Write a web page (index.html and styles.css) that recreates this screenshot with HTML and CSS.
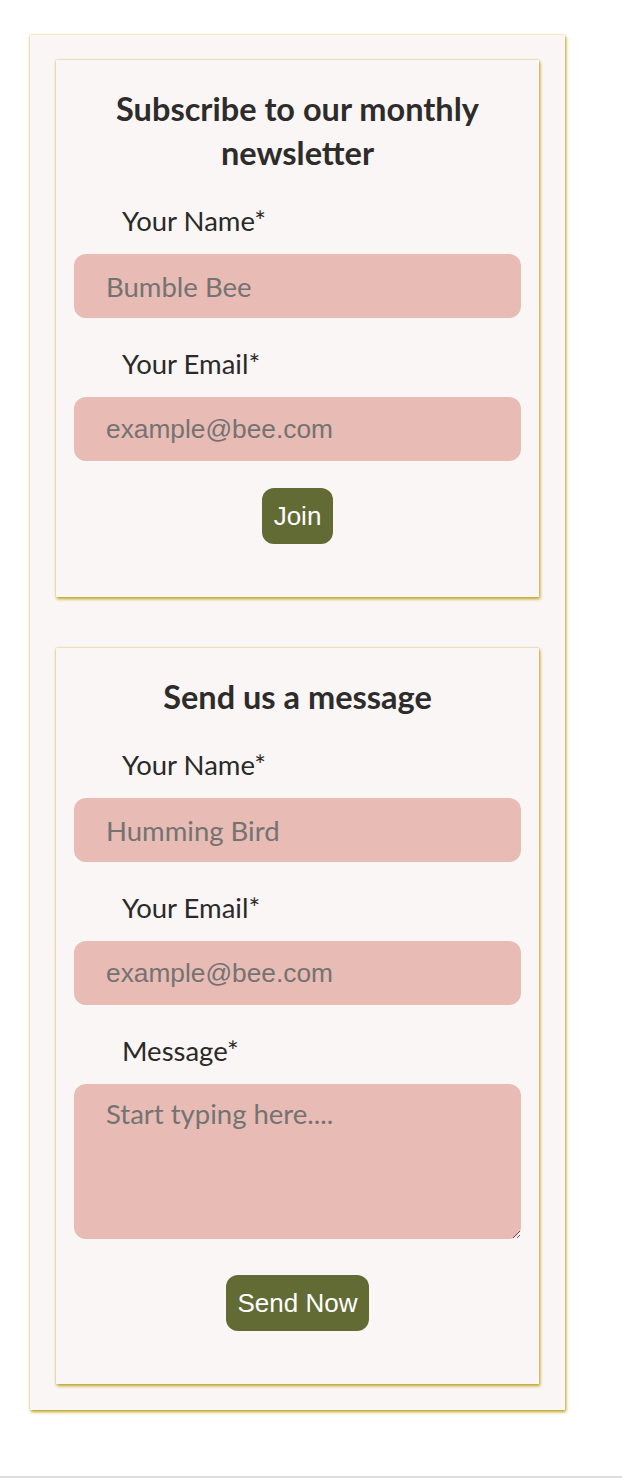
FILE: index.html
```html
<!DOCTYPE html>
<html lang="en">
<head>
<meta charset="utf-8">
<title>Contact</title>
<link rel="stylesheet" href="styles.css">
</head>
<body>
<main class="page">
  <section class="outer">
    <form class="card">
      <h2 class="card-title">Subscribe to our monthly newsletter</h2>
      <label class="field-label" for="n1">Your Name*</label>
      <input class="field" id="n1" type="text" placeholder="Bumble Bee">
      <label class="field-label" for="e1">Your Email*</label>
      <input class="field field-email" id="e1" type="email" placeholder="example@bee.com">
      <div class="actions"><button class="btn" type="button">Join</button></div>
    </form>
    <form class="card">
      <h2 class="card-title">Send us a message</h2>
      <label class="field-label" for="n2">Your Name*</label>
      <input class="field" id="n2" type="text" placeholder="Humming Bird">
      <label class="field-label" for="e2">Your Email*</label>
      <input class="field field-email" id="e2" type="email" placeholder="example@bee.com">
      <label class="field-label" for="m2">Message*</label>
      <textarea class="field field-area" id="m2" placeholder="Start typing here...."></textarea>
      <div class="actions actions-send"><button class="btn" type="button">Send Now</button></div>
    </form>
  </section>
</main>
<div class="footer-line"></div>
</body>
</html>
```
FILE: styles.css
```css
html, body {
  margin: 0;
  padding: 0;
  background: #ffffff;
  font-family: Lato, "Open Sans", sans-serif;
  color: #2d2a28;
}

.page {
  padding: 35px 0 0 30px;
  margin-bottom: 66px;
}

.outer {
  width: 535px;
  box-sizing: border-box;
  padding: 25px 26px 26px;
  background: #faf6f5;
  box-shadow: 0 0 2px rgba(200, 180, 80, 0.8), 1px 2px 3px rgba(190, 162, 30, 1);
  display: flex;
  flex-direction: column;
  gap: 51px;
}

.card {
  margin: 0;
  background: #faf6f5;
  box-shadow: 0 0 2px rgba(200, 180, 80, 0.8), 1px 2px 3px rgba(190, 162, 30, 1);
  padding: 27px 18px 53px;
  display: flex;
  flex-direction: column;
}

.card-title {
  margin: 0 0 31px;
  font-size: 32.5px;
  line-height: 44px;
  font-weight: 700;
  text-align: center;
  color: #2e2c2b;
}

.field-label {
  display: block;
  padding-left: 48px;
  font-size: 27.5px;
  line-height: 30px;
  margin-bottom: 18px;
  color: #2b2a28;
}

.field {
  display: block;
  box-sizing: border-box;
  width: 100%;
  height: 64px;
  margin: 0 0 31px;
  padding: 0 32px;
  border: none;
  border-radius: 12px;
  background: #e8bcb5;
  font-family: Lato, "Open Sans", sans-serif;
  font-size: 27.5px;
  color: #2b2a28;
  outline: none;
}

.field::placeholder {
  color: #747372;
  opacity: 1;
}

.field-email {
  font-family: "Liberation Sans", Arial, sans-serif;
  font-size: 26.3px;
}

.field-area {
  height: 155px;
  padding: 14px 32px;
  line-height: 32px;
  margin-bottom: 36px;
}

.actions {
  display: flex;
  justify-content: center;
  margin-top: -4px;
}

.actions-send {
  margin-top: 0;
}

.btn {
  height: 56px;
  padding: 0 12px;
  border: none;
  border-radius: 12px;
  background: #636b35;
  color: #ffffff;
  font-family: "Liberation Sans", Arial, sans-serif;
  font-size: 26px;
  cursor: pointer;
}

.footer-line {
  height: 2px;
  background: #dedede;
}
```
